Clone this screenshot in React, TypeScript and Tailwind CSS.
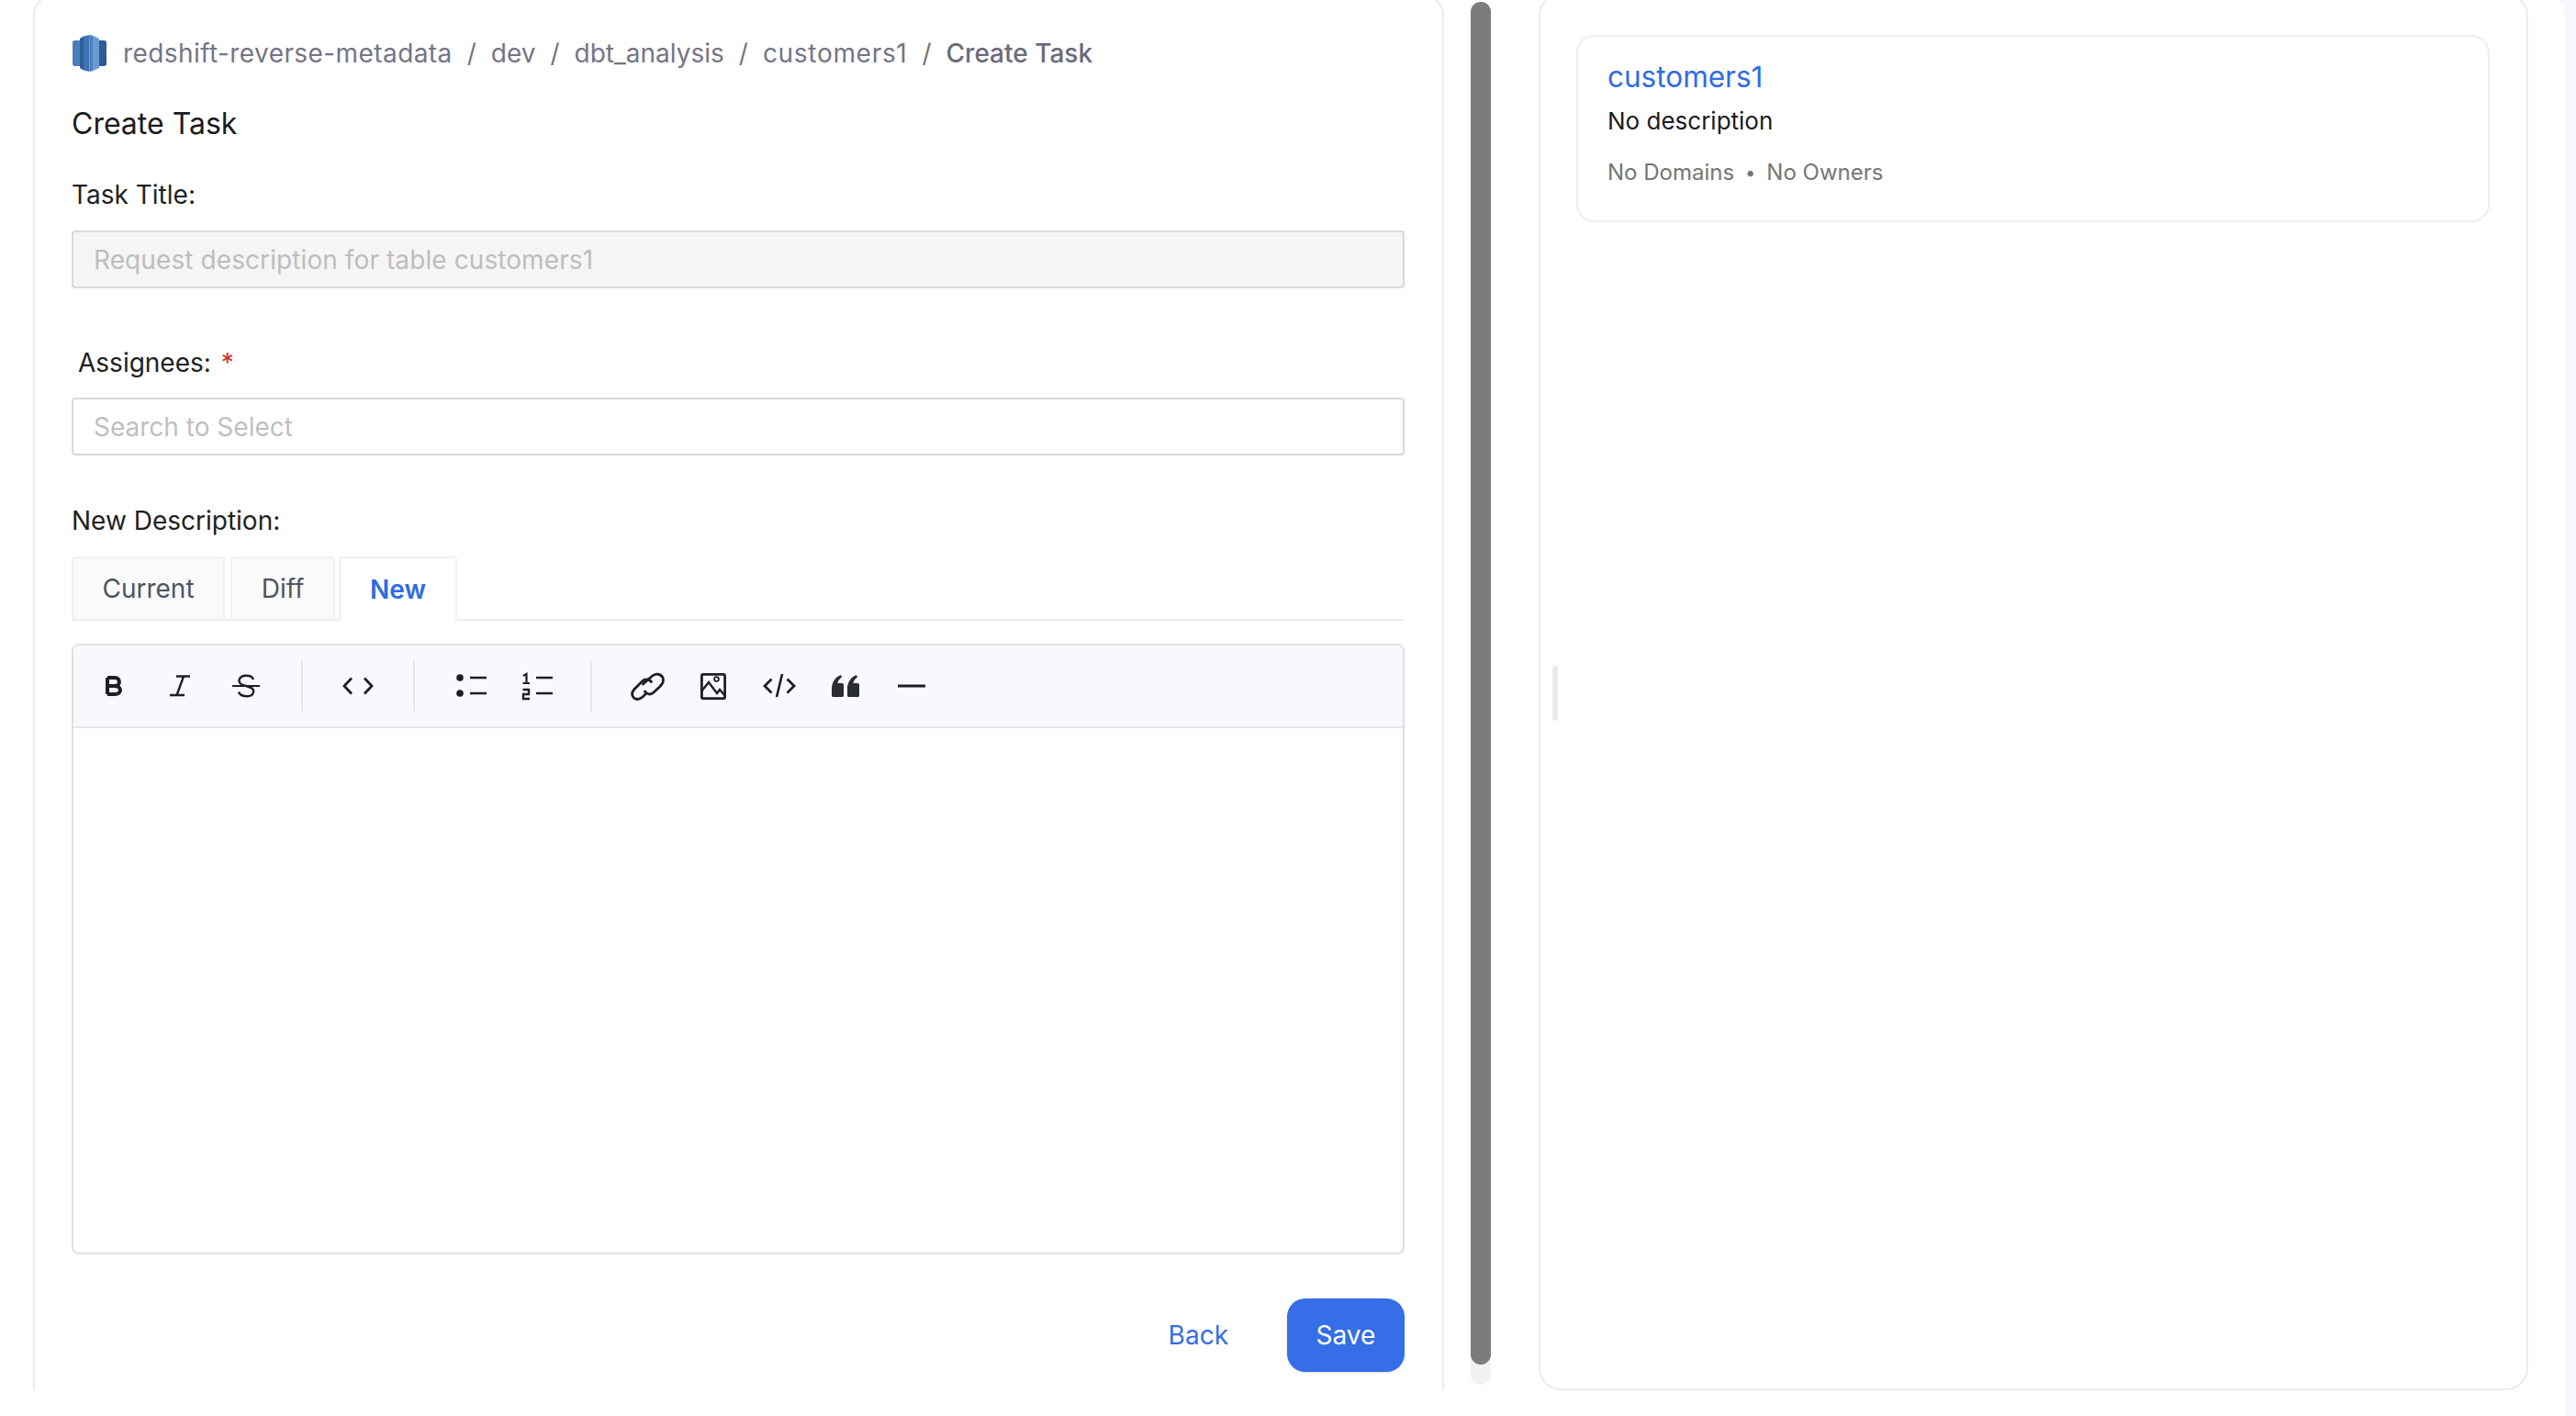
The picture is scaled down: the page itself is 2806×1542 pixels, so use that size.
import React from 'react';

const Font = '[font-family:Inter,sans-serif]';

const RedshiftLogo = () => (
  <svg width="37" height="40" viewBox="0 0 37 40" className="shrink-0 ml-[1px]">
    <path d="M0 7.5 L2 6 H8 V34 H2 L0 32.5 Z" fill="#4a7dbb" />
    <path d="M8 4 L12 1.5 V38.5 L8 36 Z" fill="#2f5d97" />
    <path d="M12 1.5 L18.5 0 V40 L12 38.5 Z" fill="#3e74b5" />
    <path d="M18.5 0 L22 0.8 V39.2 L18.5 40 Z" fill="#4a80c0" />
    <path d="M22 0.8 L29 4 V36 L22 39.2 Z" fill="#6a9bd3" />
    <path d="M29 6 H35 L37 7.5 V32.5 L35 34 H29 Z" fill="#2e5c96" />
  </svg>
);

const Svg = ({ children }: { children: React.ReactNode }) => (
  <svg width="36" height="36" viewBox="0 0 36 36" fill="none" stroke="#1d1f24" strokeWidth="2.6" className="shrink-0 overflow-visible">
    {children}
  </svg>
);

const BoldIcon = () => (
  <Svg>
    <path d="M11 9 V27 M11 9 H19 C25.5 9 25.5 18 19 18 H11 M19 18 C27 18 27 27 19 27 H11" strokeWidth="4" strokeLinejoin="round" />
  </Svg>
);

const ItalicIcon = () => (
  <Svg>
    <path d="M14 7.5 H29 M7 28 H23 M22 7.5 L14.5 28" strokeWidth="2.4" />
  </Svg>
);

const StrikeIcon = () => (
  <Svg>
    <path d="M3 18 H33" strokeWidth="2.2" />
    <path d="M26 11 C24.5 5.5 12 5 10.5 11.5 C10 15 13 17 18 18 C24 19.5 27 21.5 26 25 C24.5 31 12 30.5 10 24.5" strokeWidth="2.4" />
  </Svg>
);

const InlineCodeIcon = () => (
  <Svg>
    <path d="M11 9.5 L3 18 L11 26.5 M25 9.5 L33 18 L25 26.5" strokeWidth="2.8" />
  </Svg>
);

const BulletIcon = () => (
  <Svg>
    <circle cx="5" cy="9" r="3.8" fill="#1d1f24" stroke="none" />
    <circle cx="5" cy="26" r="3.8" fill="#1d1f24" stroke="none" />
    <path d="M16 9 H34 M16 26 H34" strokeWidth="2.4" />
  </Svg>
);

const OrderedIcon = () => (
  <Svg>
    <path d="M2 7 L5.5 5 V15 M1.5 15 H9" strokeWidth="2.2" />
    <path d="M1.5 22 H8 V27 H2 V32 H9" strokeWidth="2.4" />
    <path d="M16 9 H34 M16 26 H34" strokeWidth="2.4" />
  </Svg>
);

const LinkIcon = () => (
  <Svg>
    <path d="M13.5 16 L23 7.5 C27 4 33 4.5 35 9 C36.5 13 34.5 16 32 18.5 L25 25 C22 28 17.5 27.5 15.5 24" strokeWidth="2.8" strokeLinecap="round" />
    <path d="M22.5 13.5 C20 10.5 15.5 10 12.5 13 L4 21.5 C1 25 1 28.5 3.5 31 C6.5 33.5 10 32.5 13 30 L16 27" strokeWidth="2.8" strokeLinecap="round" />
  </Svg>
);

const ImageIcon = () => (
  <Svg>
    <rect x="5.4" y="5.4" width="25.2" height="26.2" rx="1.5" strokeWidth="2.8" />
    <path d="M5 24 L13 14 L22 26 L25 22 L31 29" strokeWidth="2.4" />
    <circle cx="21.5" cy="10.5" r="2.4" strokeWidth="1.8" />
  </Svg>
);

const CodeBlockIcon = () => (
  <Svg>
    <path d="M9.5 10.5 L2 18 L9.5 25.5 M26.5 10.5 L34 18 L26.5 25.5" strokeWidth="2.8" />
    <path d="M21 5 L15 30" strokeWidth="2.6" />
  </Svg>
);

const QuoteIcon = () => (
  <Svg>
    <path d="M3 21 C3 14 7 8 13 6 L14 8.5 C11 10.5 9.5 13 9.5 15 H14 C15.5 15 16 15.8 16 17 V28 C16 29.5 15.5 30 14 30 H5 C3.5 30 3 29.5 3 28 Z" fill="#2a2d33" stroke="none" />
    <path d="M20 21 C20 14 24 8 30 6 L31 8.5 C28 10.5 26.5 13 26.5 15 H31 C32.5 15 33 15.8 33 17 V28 C33 29.5 32.5 30 31 30 H22 C20.5 30 20 29.5 20 28 Z" fill="#2a2d33" stroke="none" />
  </Svg>
);

const RuleIcon = () => (
  <Svg>
    <path d="M3 18 H33" strokeWidth="2.8" />
  </Svg>
);

const ToolBtn = ({ children }: { children: React.ReactNode }) => (
  <div className="w-[72px] flex items-center justify-center">{children}</div>
);

const Divider = () => <div className="w-[2px] h-[56px] bg-[#e4e6ea]" />;

const Sep = () => <span className="mx-[16px] text-[#757575]">/</span>;

const Crumbs = () => (
  <div className="flex items-center h-[40px] text-[28px] leading-[40px] text-[#757486]">
    <RedshiftLogo />
    <span className="ml-[18px] tracking-[0.42px]">redshift-reverse-metadata</span>
    <Sep />
    <span>dev</span>
    <Sep />
    <span>dbt_analysis</span>
    <Sep />
    <span className="tracking-[0.7px]">customers1</span>
    <Sep />
    <span className="font-medium text-[#6b6a7b]">Create Task</span>
  </div>
);

export default function App() {
  return (
    <div className={`${Font} w-full h-[1542px] bg-[#f7f8fd] overflow-hidden`}>
      <div className="w-[2794px] h-[1549px] -mt-[7px] bg-white rounded-tr-[24px]">
        <div className="flex h-[1521px] overflow-hidden">
          {/* Left form column */}
          <div className="ml-[36px] w-[1537px] h-[1600px] shrink-0 border-2 border-[#eaebf3] rounded-[24px] pl-[40px] pr-[41px] pt-[43px]">
            <Crumbs />
            <div className="mt-[37px] text-[32px] leading-[40px] text-[#1b1b1f]">Create Task</div>
            <div className="mt-[37px] text-[28px] leading-[40px] text-[#212121]">Task Title:</div>
            <div className="mt-[19px] h-[63px] rounded-[4px] border-2 border-[#d9d9d9] bg-[#f5f5f5] flex items-center pl-[22px] text-[28px] tracking-[0.09px] text-[#bdbdbd]">
              Request description for table customers1
            </div>

            <div className="mt-[61px] ml-[7px] text-[28px] leading-[40px] text-[#212121]">
              Assignees: <span className="text-[#d0342c] ml-[3px]">*</span>
            </div>
            <div className="mt-[18px] h-[63px] rounded-[4px] border-2 border-[#d9d9d9] bg-white flex items-center pl-[22px] text-[28px] text-[#bfbfbf]">
              Search to Select
            </div>

            <div className="mt-[51px] text-[28px] leading-[40px] text-[#212121]">New Description:</div>

            <div className="mt-[19px] flex h-[70px] border-b-2 border-[#eaecef]">
              <div className="w-[167px] h-[70px] bg-[#fafafa] border-2 border-[#f0f0f0] rounded-t-[4px] flex items-center justify-center text-[28px] text-[#4b5563]">
                Current
              </div>
              <div className="ml-[6px] w-[114px] h-[70px] bg-[#fafafa] border-2 border-[#f0f0f0] rounded-t-[4px] flex items-center justify-center text-[28px] text-[#4b5563]">
                Diff
              </div>
              <div className="ml-[4px] w-[129px] h-[70px] bg-white border-2 border-b-0 border-[#eff1f4] rounded-t-[4px] flex items-center justify-center text-[28px] font-semibold text-[#2e6be6]">
                New
              </div>
            </div>

            {/* Editor */}
            <div className="mt-[25px] h-[665px] border-2 border-[#dde0e6] rounded-[8px] overflow-hidden bg-white">
              <div className="h-[90px] bg-[#f8f9fd] border-b-2 border-[#e4e6ea] flex items-center pl-[8px]">
                <ToolBtn><BoldIcon /></ToolBtn>
                <ToolBtn><ItalicIcon /></ToolBtn>
                <ToolBtn><StrikeIcon /></ToolBtn>
                <div className="ml-[24px]"><Divider /></div>
                <div className="ml-[24px]"><ToolBtn><InlineCodeIcon /></ToolBtn></div>
                <div className="ml-[24px]"><Divider /></div>
                <div className="ml-[26px]"><ToolBtn><BulletIcon /></ToolBtn></div>
                <ToolBtn><OrderedIcon /></ToolBtn>
                <div className="ml-[21px]"><Divider /></div>
                <div className="ml-[24px]"><ToolBtn><LinkIcon /></ToolBtn></div>
                <ToolBtn><ImageIcon /></ToolBtn>
                <ToolBtn><CodeBlockIcon /></ToolBtn>
                <ToolBtn><QuoteIcon /></ToolBtn>
                <ToolBtn><RuleIcon /></ToolBtn>
              </div>
            </div>

            <div className="mt-[48px] flex items-center justify-end">
              <span className="text-[28px] text-[#356ee6] mr-[64px]">Back</span>
              <div className="w-[128px] h-[80px] rounded-[20px] bg-[#356ee6] shadow-sm flex items-center justify-center text-[28px] text-white">
                Save
              </div>
            </div>
          </div>

          {/* Scrollbar */}
          <div className="ml-[29px] w-[22px] h-[1506px] mt-[9px] rounded-full bg-[#f1f1f1] shrink-0">
            <div className="h-[1484px] w-[22px] rounded-full bg-[#7c7c7c]" />
          </div>

          <div className="w-[52px] shrink-0" />

          {/* Right panel */}
          <div className="relative w-[1078px] h-[1521px] shrink-0 border-2 border-[#eaebf3] rounded-[24px] pl-[39px] pr-[40px] pt-[43px]">
            <div className="absolute left-[13px] top-[730px] w-[6px] h-[60px] rounded-full bg-[#e9e9ee]" />
            <div className="h-[204px] border-2 border-[#eceef3] rounded-[20px] pl-[32px] pt-[24px]">
              <div className="text-[31.5px] leading-[40px] text-[#2e6be6]">customers1</div>
              <div className="mt-[8px] text-[26px] leading-[40px] text-[#1b1b1f]">No description</div>
              <div className="mt-[20px] text-[24px] leading-[32px] text-[#757575] flex items-center">
                No Domains
                <span className="mx-[12px] text-[20px]">•</span>
                No Owners
              </div>
            </div>
          </div>
        </div>
      </div>
    </div>
  );
}
